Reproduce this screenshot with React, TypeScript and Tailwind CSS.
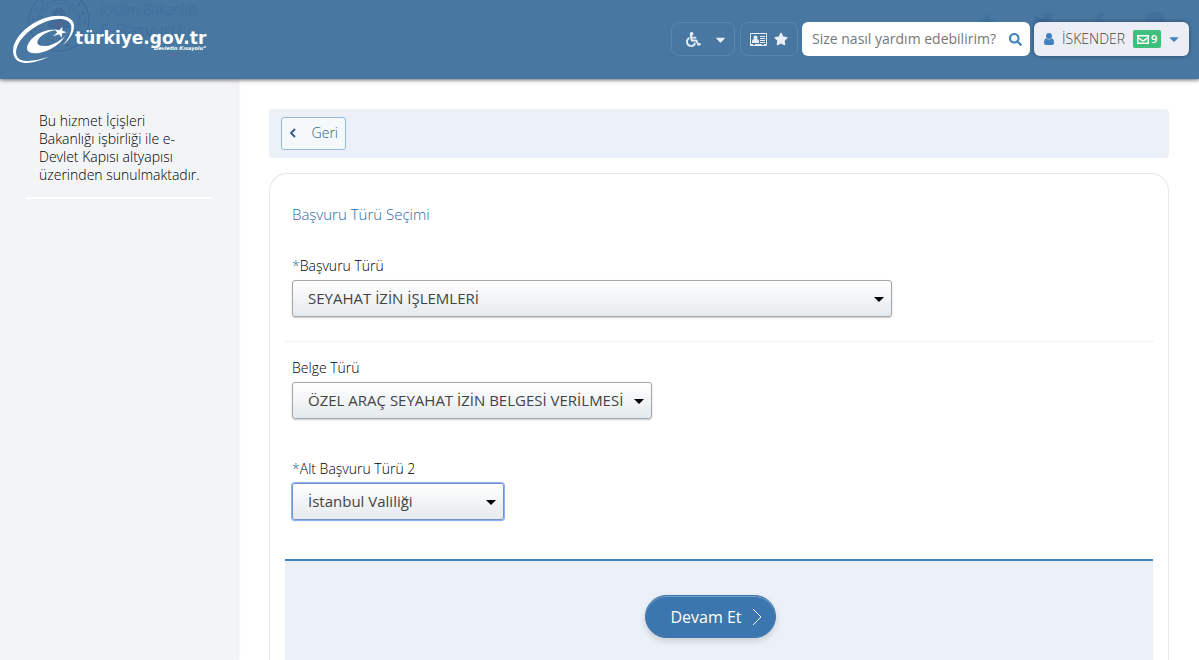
import React, { useState } from 'react';
import { FaCaretDown, FaFacebookF, FaSearch, FaStar, FaTwitter, FaWheelchair } from 'react-icons/fa';

const applicationTypes = ['SEYAHAT İZİN İŞLEMLERİ'];
const documentTypes = ['ÖZEL ARAÇ SEYAHAT İZİN BELGESİ VERİLMESİ'];
const subTypes = ['İstanbul Valiliği'];

const Logo: React.FC = () => (
  <svg viewBox="36 45 188 147" className="h-[49px] w-[63px] shrink-0" fill="#fff" aria-hidden="true">
    <path d="M148 169 C120 183 96 190 74 189 C48 187 37 170 39 148 C42 112 84 72 132 55 C178 40 216 48 221 73 C224 93 212 115 189 135 C207 114 216 94 213 77 C208 55 174 51 136 65 C92 82 52 119 48 152 C46 171 56 181 78 183 C98 184 122 178 148 169Z" />
    <path d="M169 90 C132 85 94 108 82 136 C75 158 94 163 120 158 C150 152 180 134 195 108 C176 126 153 137 137 138 C115 139 106 131 115 118 C124 104 147 92 169 90Z" />
    <path d="M187 80 L186 92 L200 97 L186 100 L184 113 L177 103 L158 109 L171 98 L164 88 L177 91Z" />
  </svg>
);

const Emblem: React.FC = () => (
  <svg viewBox="0 0 62 62" className="h-[62px] w-[62px] shrink-0" fill="none" stroke="#406c9c">
    <circle cx="31" cy="31" r="30" strokeWidth="1.5" />
    <circle cx="31" cy="31" r="25.5" strokeWidth="2.5" strokeDasharray="2.5 7.5" />
    <circle cx="31" cy="31" r="21" />
    <circle cx="31" cy="31" r="18" strokeWidth="2" strokeDasharray="1 2" />
    <circle cx="31" cy="24" r="6.5" fill="#406c9c" stroke="none" />
    <path d="M20 33 Q31 25 42 33 V37 Q31 42 20 37Z" fill="#406c9c" stroke="none" />
    <path d="M28 31 H34 L35 35 L31 38 L27 35Z" fill="#52658f" stroke="none" />
  </svg>
);

const CardIcon: React.FC = () => (
  <svg viewBox="0 0 17 13" className="h-[13px] w-[17px]" fill="currentColor" aria-hidden="true">
    <path fillRule="evenodd" d="M1 0 H16 Q17 0 17 1 V12 Q17 13 16 13 H1 Q0 13 0 12 V1 Q0 0 1 0Z M1 1 V11 H3 V12 H5 V11 H12 V12 H14 V11 H16 V1Z" />
    <circle cx="5.5" cy="4.5" r="2" />
    <path d="M2 10 V8 Q2.5 6 4 6 H7 Q8.5 6 9 8 V10Z M10 3 H15 V4 H10Z M10 5 H15 V6 H10Z M10 7 H15 V8 H10Z M10 9 H15 V10 H10Z" />
  </svg>
);

const UserIcon: React.FC = () => (
  <svg viewBox="0 0 10 12" className="h-3 w-[10px]" fill="#3f82bf" aria-hidden="true">
    <circle cx="5" cy="3" r="3" />
    <path d="M2.2 5.2 Q5 8 7.8 5.2 Q10 6 10 10 Q10 12 8 12 H2 Q0 12 0 10 Q0 6 2.2 5.2Z" />
  </svg>
);

const MailIcon: React.FC = () => (
  <svg viewBox="0 0 12 9" className="h-[9px] w-3" fill="none" stroke="#fff" strokeWidth="1.5" aria-hidden="true">
    <rect x="0.75" y="0.75" width="10.5" height="7.5" />
    <path d="M1 2.5 L4.5 5.2 L6 6 L7.5 5.2 L11 2.5" />
  </svg>
);

interface SelectFieldProps {
  id: string;
  label: string;
  options: string[];
  width: string;
  required?: boolean;
  active?: boolean;
}

const SelectField: React.FC<SelectFieldProps> = ({ id, label, options, width, required, active }) => {
  const [value, setValue] = useState(options[0]);

  return (
    <div>
      <label htmlFor={id} className="mb-1 block text-sm leading-5 font-light text-black">
        {required && <span className="text-[#1d6b8f]">*</span>}
        {label}
      </label>
      <div className={`relative max-w-full ${width}`}>
        <select
          id={id}
          value={value}
          onChange={e => setValue(e.target.value)}
          className={`block h-[37px] w-full appearance-none rounded-[3px] border bg-linear-to-b from-white to-[#e5eaed] pr-7 pb-px pl-[15px] text-[15px] text-[#444] shadow-[0_1px_2px_rgba(0,0,0,0.2)] outline-none ${
            active ? 'border-[#7592c6] ring-1 ring-[#8ab2f5]' : 'border-[#a3a7aa]'
          }`}
        >
          {options.map(o => (
            <option key={o}>{o}</option>
          ))}
        </select>
        <svg viewBox="0 0 10 5" className="pointer-events-none absolute top-[17px] right-2 h-[5px] w-[10px]" aria-hidden="true">
          <path d="M0 0 H10 L5 5Z" fill="#000" />
        </svg>
      </div>
    </div>
  );
};

const Header: React.FC = () => {
  const [query, setQuery] = useState('');

  return (
    <header className="relative z-10 h-[79px] bg-[#4878a2] shadow-[0_1px_4px_rgba(0,0,0,0.6)]">
      {/* page title showing faintly through the bar */}
      <div className="absolute inset-0 overflow-hidden text-[#3e6d9b]" aria-hidden="true">
        <div className="absolute -top-[10px] left-7 flex gap-[10px]">
          <Emblem />
          <div className="pt-[10px] font-light">
            <p className="text-sm leading-5">İçişleri Bakanlığı</p>
            <p className="text-lg leading-5">E-Başvuru</p>
          </div>
        </div>
        <div className="absolute top-[11px] right-4 flex items-center text-[#41709d]">
          <span className="flex w-14 justify-center"><FaStar size={18} /></span>
          <span className="flex w-14 justify-center"><FaTwitter size={21} /></span>
          <span className="flex w-14 justify-center"><FaFacebookF size={18} /></span>
          <span className="flex w-14 justify-center"><span className="h-5 w-5 rounded-full bg-[#41709d]" /></span>
        </div>
      </div>

      <div className="relative flex h-full items-center justify-between pr-[10px] pl-3">
        <a href="#" className="flex items-center text-white">
          <Logo />
          <span className="flex flex-col items-end pt-0.5 font-['DejaVu_Sans'] font-bold">
            <span className="text-[17px] leading-4">türkiye.gov.tr</span>
            <span className="text-[5px] leading-[5px] italic">“Devletin Kısayolu”</span>
          </span>
        </a>

        <div className="mb-px flex h-[34px] gap-1 text-[#e9eef6]">
          <button aria-label="Erişilebilirlik" className="flex w-16 items-center justify-center gap-3 rounded-lg border border-[#5a87b0] pl-2">
            <FaWheelchair size={15} />
            <FaCaretDown size={15} />
          </button>
          <button aria-label="Favoriler" className="ml-px flex w-[58px] items-center justify-center gap-[7px] rounded-lg border border-[#5a87b0]">
            <CardIcon />
            <FaStar size={14} />
          </button>
          <form className="flex w-[228px] items-center rounded-md bg-white pr-2 pl-[10px]" onSubmit={e => e.preventDefault()}>
            <input
              type="text"
              value={query}
              onChange={e => setQuery(e.target.value)}
              aria-label="Arama"
              placeholder="Size nasıl yardım edebilirim?"
              className="min-w-0 flex-1 text-sm text-gray-700 outline-none placeholder:text-[#777]"
            />
            <button aria-label="Ara" className="text-[#3f82bf]">
              <FaSearch size={13} />
            </button>
          </form>
          <button className="flex w-[155px] items-center rounded-md bg-[#ebeff5] pr-2 pl-[10px] text-sm text-[#444] shadow-[0_0_4px_rgba(0,0,0,0.4)]">
            <UserIcon />
            <span className="ml-2 font-light">İSKENDER</span>
            <span className="ml-2 flex h-[18px] items-center gap-0.5 rounded-xs bg-[#40bf7c] px-1 text-[11px] font-semibold text-white">
              <MailIcon />9
            </span>
            <FaCaretDown size={14} className="ml-auto text-[#3f82bf]" />
          </button>
        </div>
      </div>
    </header>
  );
};

const App: React.FC = () => (
  <div className="flex min-h-screen flex-col bg-white font-['Open_Sans',sans-serif]">
    <Header />
    <div className="flex flex-1">
      <aside className="w-[238px] shrink-0 bg-[#f3f4f6] px-[26px] pt-[33px] shadow-[0_0_3px_rgba(0,0,0,0.15)]">
        <p className="border-b-2 border-white pr-2 pb-[13px] pl-[13px] text-sm leading-[18px] font-light text-black">
          Bu hizmet İçişleri Bakanlığı işbirliği ile e-Devlet Kapısı altyapısı üzerinden sunulmaktadır.
        </p>
      </aside>

      <main className="flex flex-1 flex-col pt-[30px] pr-[30px] pl-[31px]">
        <nav className="flex rounded-sm bg-[#ecf0f8] px-3 py-2">
          <a href="#" className="flex h-[33px] w-[65px] items-center justify-between rounded-[3px] border border-[#92b8da] bg-[#f6f9fb] px-[7px] pb-px text-sm font-light text-[#2f5a8a]">
            <svg viewBox="0 0 8 10" className="h-[10px] w-2" fill="none" stroke="currentColor" strokeWidth="1.8" aria-hidden="true">
              <path d="M6 1 L2 5 L6 9" />
            </svg>
            Geri
          </a>
        </nav>

        <form className="mt-[15px] flex flex-1 flex-col rounded-t-[18px] border border-b-0 border-[#e6e7ea] px-[15px] pt-7" onSubmit={e => e.preventDefault()}>
          <h2 className="mb-[30px] px-[7px] text-[15px] leading-6 font-light text-[#1f6ba8]">Başvuru Türü Seçimi</h2>
          <div className="border-b border-dotted border-[#e4e6e8] px-[7px] pb-6">
            <SelectField id="basvuru-turu" label="Başvuru Türü" options={applicationTypes} width="w-[600px]" required />
          </div>
          <div className="flex flex-col gap-10 px-[7px] pt-4 pb-[39px]">
            <SelectField id="belge-turu" label="Belge Türü" options={documentTypes} width="w-[360px]" />
            <SelectField id="alt-basvuru-turu" label="Alt Başvuru Türü 2" options={subTypes} width="w-[212px]" required active />
          </div>
          <div className="flex flex-1 items-start justify-center border-t-2 border-[#4084bf] bg-[#ecf0f8] pt-[34px] pb-[22px]">
            <button
              type="submit"
              className="mr-[18px] flex h-[43px] w-[131px] items-center justify-center gap-[10px] rounded-full border border-[#3a75ac] bg-[#3c76ae] pl-3 text-base text-white shadow-[0_3px_6px_rgba(0,0,0,0.15),inset_0_1px_0_rgba(255,255,255,0.3)]"
            >
              Devam Et
              <svg viewBox="0 0 10 18" className="h-[18px] w-[10px]" fill="none" stroke="currentColor" aria-hidden="true">
                <path d="M1 1 L9 9 L1 17" />
              </svg>
            </button>
          </div>
        </form>
      </main>
    </div>
  </div>
);

export default App;
